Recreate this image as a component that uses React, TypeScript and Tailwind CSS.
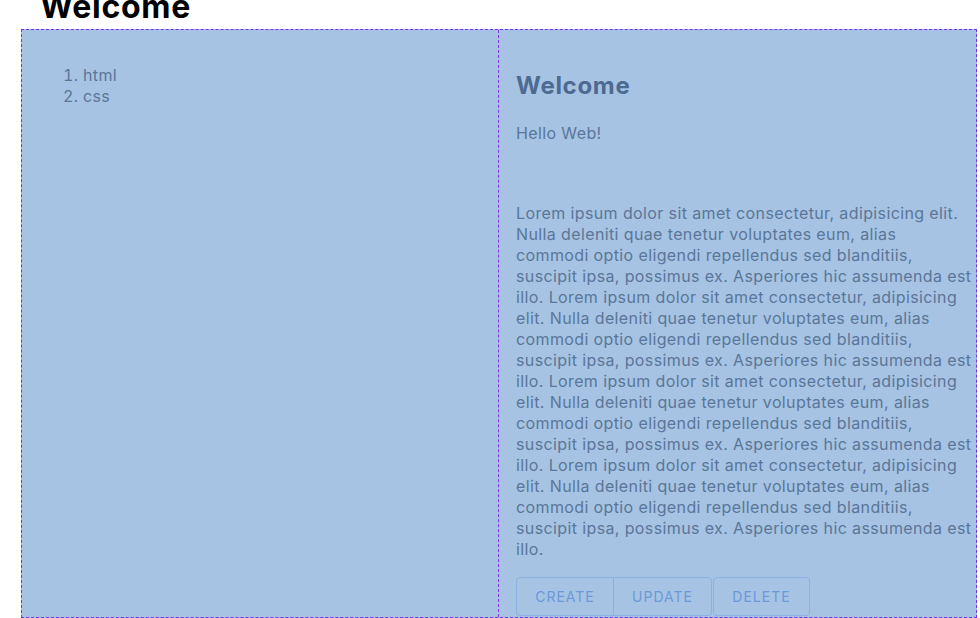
import React from "react";

const lorem =
  "Lorem ipsum dolor sit amet consectetur, adipisicing elit. Nulla deleniti quae tenetur voluptates eum, alias commodi optio eligendi repellendus sed blanditiis, suscipit ipsa, possimus ex. Asperiores hic assumenda est illo.";

export default function App() {
  const font = { fontFamily: "Inter, 'Liberation Sans', sans-serif" };
  return (
    <div className="h-[618px] w-[980px] overflow-hidden bg-white" style={font}>
      <h1 className="ml-[40px] mt-[-12px] text-[32px] font-bold leading-[37px] tracking-[0.7px] text-black">Welcome</h1>
      <div className="ml-[21px] mt-[4px] flex h-[589px] w-[956px] border border-dashed border-[#7a2ff0] bg-[#a6c3e3]">
        <div className="w-[476px] shrink-0 pt-[35px]">
          <ol className="list-decimal pl-[61px] text-[16px] leading-[21px] tracking-[0.38px] text-[#5a7698]">
            <li>html</li>
            <li>css</li>
          </ol>
        </div>
        <div className="flex-1 border-l border-dashed border-[#8a33f0] pl-[17px] pr-[4px]">
          <h2 className="mt-[41px] text-[24px] font-bold leading-[29px] tracking-[0.7px] text-[#4d6a90]">Welcome</h2>
          <p className="mt-[23px] text-[16px] leading-[21px] tracking-[0.38px] text-[#5a7698]">Hello Web!</p>
          <p className="mt-[59px] text-[16px] leading-[21px] tracking-[0.38px] text-[#5a7698]">
            {lorem} {lorem} {lorem} {lorem}
          </p>
          <div className="mt-[17px] flex">
            <div className="flex">
              <button className="h-[39px] w-[98px] rounded-l-[4px] border border-[#8cb0e2] text-[14px] font-normal uppercase tracking-[1px] text-[#6c98d8]">
                Create
              </button>
              <button className="-ml-px h-[39px] w-[99px] rounded-r-[4px] border border-[#8cb0e2] text-[14px] font-normal uppercase tracking-[1px] text-[#6c98d8]">
                Update
              </button>
            </div>
            <button className="ml-px h-[39px] w-[97px] rounded-[4px] border border-[#8cb0e2] text-[14px] font-normal uppercase tracking-[1px] text-[#6c98d8]">
              Delete
            </button>
          </div>
        </div>
      </div>
    </div>
  );
}
